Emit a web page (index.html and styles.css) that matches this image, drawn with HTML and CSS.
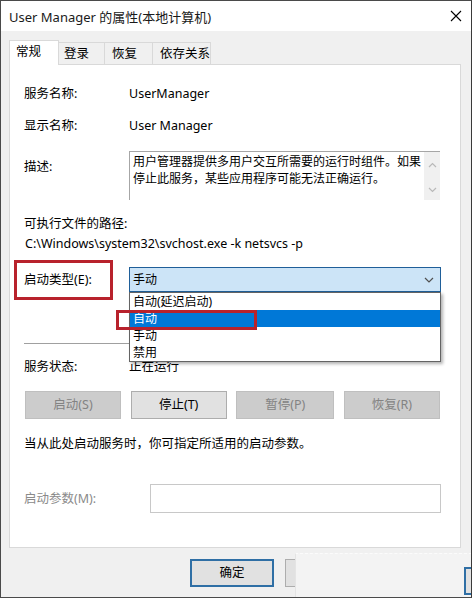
FILE: index.html
```html
<!DOCTYPE html>
<html lang="zh-CN">
<head>
<meta charset="utf-8">
<title>User Manager 的属性(本地计算机)</title>
<link rel="stylesheet" href="styles.css">
</head>
<body>
<div class="window">
  <div class="titlebar">
    <span class="title">User Manager 的属性(本地计算机)</span>
    <svg class="close" width="12" height="12" viewBox="0 0 12 12"><path d="M1 1L11 11M11 1L1 11" stroke="#000" stroke-width="1.1" fill="none"/></svg>
  </div>
  <div class="main">
    <div class="tabs">
      <div class="tab tab-active">常规</div>
      <div class="tab tab-w46">登录</div>
      <div class="tab tab-w48">恢复</div>
      <div class="tab tab-w58">依存关系</div>
    </div>
    <div class="panel">
      <div class="row row-first">
        <span class="label">服务名称:</span>
        <span class="value">UserManager</span>
      </div>
      <div class="row row-second">
        <span class="label">显示名称:</span>
        <span class="value">User Manager</span>
      </div>
      <div class="row-desc">
        <span class="label label-desc">描述:</span>
        <div class="desc-box">
          <div class="desc-text">用户管理器提供多用户交互所需要的运行时组件。如果停止此服务，某些应用程序可能无法正确运行。</div>
          <div class="scrollbar">
            <svg width="9" height="6" viewBox="0 0 9 6"><path d="M1 5L4.5 1.5L8 5" stroke="#b9b9b9" stroke-width="1.2" fill="none"/></svg>
            <svg width="9" height="6" viewBox="0 0 9 6"><path d="M1 1L4.5 4.5L8 1" stroke="#b9b9b9" stroke-width="1.2" fill="none"/></svg>
          </div>
        </div>
      </div>
      <div class="path-label">可执行文件的路径:</div>
      <div class="path">C:\Windows\system32\svchost.exe -k netsvcs -p</div>
      <div class="row row-combo">
        <span class="label">启动类型(E):</span>
        <div class="combo">
          <span class="combo-text">手动</span>
          <svg class="chevron" width="10" height="6" viewBox="0 0 10 6"><path d="M1 1L5 5L9 1" stroke="#505050" stroke-width="1.2" fill="none"/></svg>
          <ul class="droplist">
            <li class="item">自动(延迟启动)</li>
            <li class="item item-selected">自动</li>
            <li class="item">手动</li>
            <li class="item">禁用</li>
          </ul>
        </div>
        <div class="mark mark-label"></div>
        <div class="mark mark-item"></div>
      </div>
      <div class="separator"></div>
      <div class="row row-status">
        <span class="label">服务状态:</span>
        <span class="value">正在运行</span>
      </div>
      <div class="buttons">
        <div class="btn btn-disabled">启动(S)</div>
        <div class="btn btn-normal">停止(T)</div>
        <div class="btn btn-disabled btn-wide">暂停(P)</div>
        <div class="btn btn-disabled">恢复(R)</div>
      </div>
      <div class="hint">当从此处启动服务时，你可指定所适用的启动参数。</div>
      <div class="row row-params">
        <span class="label label-params">启动参数(M):</span>
        <div class="input"></div>
      </div>
    </div>
    <div class="footer">
      <div class="fbtn fbtn-default">确定</div>
      <div class="fbtn">取消</div>
    </div>
  </div>
  <div class="overlay">
    <div class="overlay-btn"></div>
  </div>
</div>
</body>
</html>
```
FILE: styles.css
```css
html, body {
  margin: 0;
  padding: 0;
  background: #f0f0f0;
}
.window {
  position: relative;
  width: 472px;
  height: 598px;
  box-sizing: border-box;
  border: 1px solid #4a4a4a;
  border-right-color: #3a3a3a;
  background: #f0f0f0;
  font-family: "Noto Sans", "Noto Sans CJK SC", sans-serif;
  font-size: 12.5px;
  color: #000;
  overflow: hidden;
}
.titlebar {
  height: 30px;
  background: #fff;
  display: flex;
  align-items: center;
  justify-content: space-between;
  padding: 0 9px 0 8px;
}
.title {
  font-size: 13px;
  line-height: 18px;
  color: #1a1a1a;
  margin-top: 1px;
}
.close {
  display: block;
}
.main {
  padding: 9px 10px 0 8px;
}
.tabs {
  display: flex;
  align-items: flex-end;
  height: 24px;
  position: relative;
  z-index: 2;
}
.tab {
  box-sizing: border-box;
  height: 22px;
  line-height: 22px;
  padding-left: 7px;
  border: 1px solid #d9d9d9;
  border-bottom: none;
  border-left: none;
  background: #f0f0f0;
  font-size: 12.5px;
}
.tab-active {
  height: 25px;
  width: 50px;
  margin-bottom: -1px;
  background: #fff;
  border-left: 1px solid #d9d9d9;
  line-height: 22px;
  padding-left: 6px;
}
.tab-w46 { width: 46px; padding-left: 5px; }
.tab-w48 { width: 48px; }
.tab-w58 { width: 58px; }
.panel {
  position: relative;
  z-index: 1;
  box-sizing: border-box;
  width: 452px;
  height: 484px;
  background: #fff;
  border: 1px solid #d9d9d9;
  padding: 20px 19px 0 14px;
}
.row {
  display: flex;
  align-items: center;
  line-height: 18px;
  position: relative;
}
.label {
  width: 105px;
  flex: none;
}
.row-second { margin-top: 14px; }
.row-desc {
  display: flex;
  margin-top: 16px;
}
.label-desc {
  margin-top: 7px;
  line-height: 18px;
}
.desc-box {
  box-sizing: border-box;
  width: 311px;
  height: 49px;
  border-top: 1px solid #a6a6a6;
  border-left: 1px solid #a6a6a6;
  display: flex;
  font-size: 12px;
}
.desc-text {
  flex: 1;
  padding: 1px 0 0 3px;
  line-height: 17px;
}
.scrollbar {
  width: 16px;
  background: #f0f0f0;
  display: flex;
  flex-direction: column;
  align-items: center;
  justify-content: space-between;
  padding: 10px 0 7px;
  box-sizing: border-box;
}
.scrollbar svg { display: block; }
.path-label {
  margin-top: 15px;
  line-height: 18px;
}
.path {
  margin-top: 2px;
  line-height: 18px;
  padding-left: 1px;
}
.row-combo {
  margin-top: 14px;
  height: 25px;
}
.combo {
  position: relative;
  box-sizing: border-box;
  width: 312px;
  height: 25px;
  background: #cce4f7;
  border: 1px solid #1f5f99;
  display: flex;
  align-items: center;
  justify-content: space-between;
  padding: 0 6px 0 3px;
  font-size: 12px;
}
.chevron { display: block; }
.droplist {
  position: absolute;
  left: -1px;
  top: 24px;
  width: 312px;
  box-sizing: border-box;
  margin: 0;
  padding: 0;
  list-style: none;
  background: #fff;
  border: 1px solid #646464;
  box-shadow: 2px 2px 3px rgba(0, 0, 0, 0.3);
  z-index: 5;
  font-size: 12px;
}
.item {
  height: 17px;
  line-height: 17px;
  padding-left: 3px;
}
.item-selected {
  background: #0078d7;
  color: #fff;
}
.mark {
  position: absolute;
  box-sizing: border-box;
  border: 3px solid #b8222c;
  z-index: 6;
}
.mark-label {
  left: -10px;
  top: -7px;
  width: 99px;
  height: 40px;
}
.mark-item {
  left: 92px;
  top: 43px;
  width: 141px;
  height: 20px;
}
.separator {
  margin-top: 51px;
  height: 1px;
  background: #a0a0a0;
}
.row-status { margin-top: 14px; }
.buttons {
  display: flex;
  justify-content: space-between;
  margin-top: 15px;
  padding-left: 1px;
  width: 416px;
  box-sizing: border-box;
}
.btn {
  box-sizing: border-box;
  width: 96px;
  height: 28px;
  line-height: 26px;
  text-align: center;
  border: 1px solid #bfbfbf;
}
.btn-wide { width: 98px; }
.btn-disabled {
  background: #cccccc;
  color: #838383;
}
.btn-normal {
  background: #e1e1e1;
  border-color: #adadad;
}
.hint {
  margin-top: 16px;
  line-height: 18px;
}
.row-params {
  margin-top: 31px;
  height: 29px;
}
.label-params {
  width: 126px;
  color: #8a8a8a;
}
.input {
  box-sizing: border-box;
  width: 291px;
  height: 29px;
  border: 1px solid #c8c8c8;
  background: #fff;
}
.footer {
  display: flex;
  gap: 11px;
  margin-top: 11px;
  padding-left: 181px;
}
.fbtn {
  box-sizing: border-box;
  width: 84px;
  height: 28px;
  line-height: 26px;
  text-align: center;
  background: #e1e1e1;
  border: 1px solid #adadad;
}
.fbtn-default {
  border: 2px solid #2f6fa5;
  line-height: 24px;
}
.overlay {
  position: absolute;
  left: 294px;
  top: 552px;
  right: -1px;
  bottom: -1px;
  background: #f3f3f3;
  border-top: 1px dashed #fbfbfb;
  border-left: 1px solid #e4e4e4;
  z-index: 10;
}
.overlay-btn {
  position: absolute;
  left: 168px;
  top: 13px;
  width: 40px;
  height: 28px;
  box-sizing: border-box;
  border: 2px solid #2f6fa5;
  background: #e1e1e1;
}
```
